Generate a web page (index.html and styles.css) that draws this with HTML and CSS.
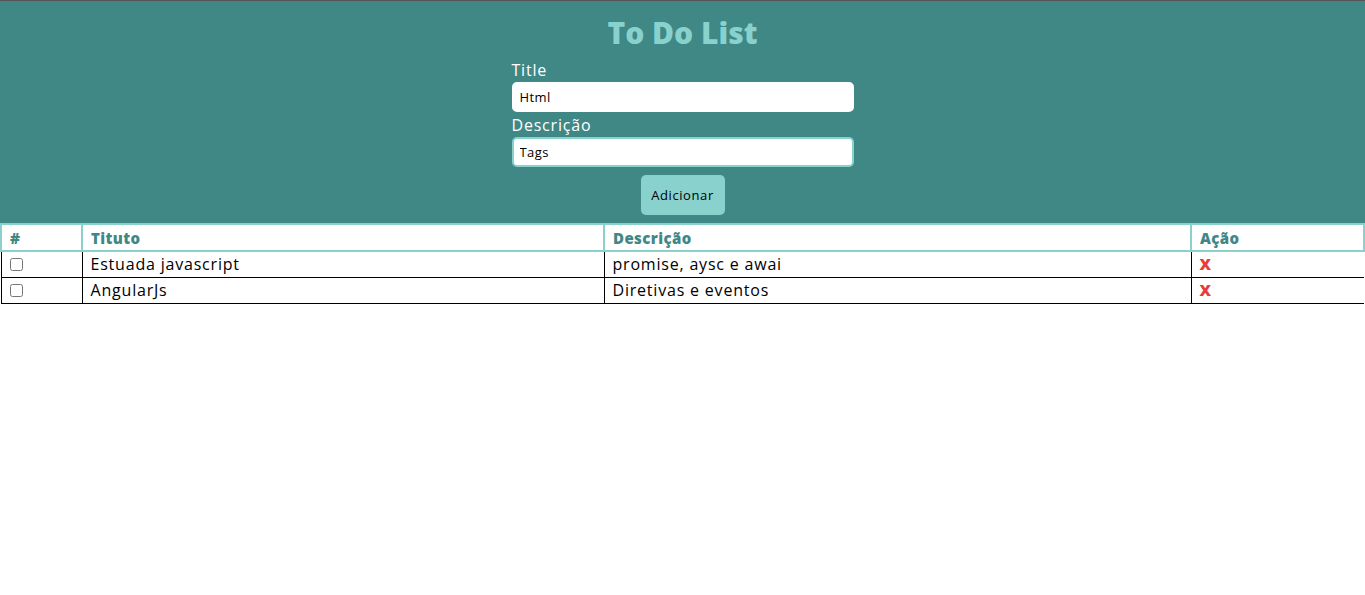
FILE: index.html
```html
<!DOCTYPE html>
<html lang="pt">
<head>
<meta charset="utf-8">
<title>To Do List</title>
<link rel="stylesheet" href="styles.css">
</head>
<body>
<header class="top">
  <h1 class="title">To Do List</h1>
  <form class="form">
    <label class="label" for="t">Title</label>
    <input class="field" id="t" type="text" value="Html">
    <label class="label" for="d">Descrição</label>
    <input class="field field-focus" id="d" type="text" value="Tags">
    <div class="actions"><button class="btn" type="button">Adicionar</button></div>
  </form>
</header>
<table class="list">
  <colgroup>
    <col class="c1"><col class="c2"><col class="c3"><col class="c4">
  </colgroup>
  <thead>
    <tr><th>#</th><th>Tituto</th><th>Descrição</th><th>Ação</th></tr>
  </thead>
  <tbody>
    <tr><td><input type="checkbox" class="chk"></td><td>Estuada javascript</td><td>promise, aysc e awai</td><td class="del">X</td></tr>
    <tr><td><input type="checkbox" class="chk"></td><td>AngularJs</td><td>Diretivas e eventos</td><td class="del">X</td></tr>
  </tbody>
</table>
</body>
</html>
```
FILE: styles.css
```css
* { box-sizing: border-box; }
body {
  margin: 0;
  font-family: "Open Sans", "DejaVu Sans", sans-serif;
  background: #fff;
  border-top: 1px solid #555;
}
.top {
  background: #3f8886;
  padding: 12px 0 8px;
  display: flex;
  flex-direction: column;
  align-items: center;
}
.title {
  margin: 0;
  font-size: 30px;
  line-height: 40px;
  font-weight: 800;
  color: #88d1cd;
}
.form {
  width: 342px;
  display: flex;
  flex-direction: column;
  margin-top: 6px;
}
.label {
  color: #fff;
  font-size: 16px;
  letter-spacing: 0.8px;
  line-height: 23px;
}
.field {
  height: 30px;
  border: 2px solid #fff;
  border-radius: 5px;
  padding: 0 6px;
  font-family: inherit;
  font-size: 13px;
  letter-spacing: 0.4px;
  color: #000;
  outline: none;
  margin-bottom: 2px;
}
.field-focus { border-color: #88d1cd; }
.actions {
  display: flex;
  justify-content: center;
  margin-top: 6px;
}
.btn {
  height: 40px;
  padding: 0;
  width: 84px;
  border: 0;
  border-radius: 5px;
  background: #88d1cd;
  font-family: inherit;
  font-size: 13px;
  letter-spacing: 0.6px;
  color: #000;
}
.list {
  width: 100%;
  border-collapse: collapse;
  font-size: 16px;
}
.c1 { width: 81px; }
.c2 { width: 522px; }
.c3 { width: 587px; }
.list th {
  border: 2px solid #88d1cd;
  color: #3f8886;
  font-weight: 800;
  font-size: 15px;
  letter-spacing: 0.4px;
  text-align: left;
  padding: 0 8px;
  height: 27px;
}
.list td {
  border: 1px solid #000;
  padding: 0 8px;
  height: 26px;
  color: #000;
  letter-spacing: 0.8px;
}
.list td:last-child { border-right: 0; }
.chk { margin: -3px 0 0 0; width: 13px; height: 13px; vertical-align: middle; }
.list td.del { color: #ea3a3a; font-weight: 800; }
```
